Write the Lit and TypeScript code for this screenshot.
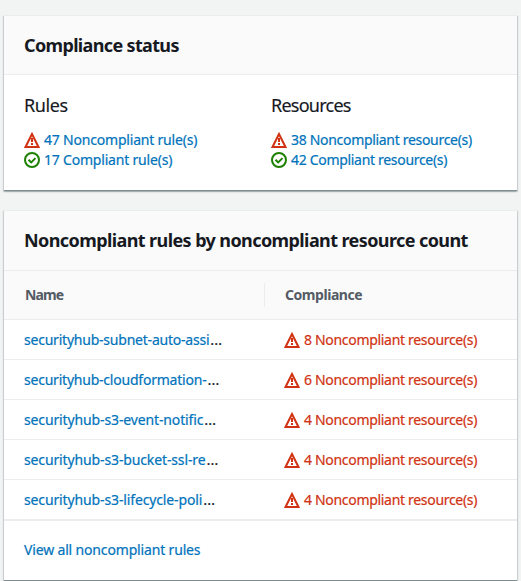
import { LitElement, html, css, svg } from "lit";
import { customElement, property } from "lit/decorators.js";

@customElement("status-icon")
class StatusIcon extends LitElement {
  @property() kind = "warning";

  static styles = css`
    :host { display: block; width: 16px; height: 16px; flex: none; }
    svg { display: block; fill: none; stroke-width: 2; }
    .warning { stroke: #d13212; }
    .success { stroke: #1d8102; }
  `;

  render() {
    const shape =
      this.kind === "warning"
        ? svg`<path d="M8 2 1.5 15h13z"/><path d="M8 6v4M8 11v2"/>`
        : svg`<circle cx="8" cy="8" r="7"/><path d="m4.5 7.8 2.7 2.6 4.3-4.3"/>`;
    return html`<svg class=${this.kind} width="16" height="16" viewBox="0 0 16 16">${shape}</svg>`;
  }
}

const groups = [
  { title: "Rules", kind: "rules", bad: "47 Noncompliant rule(s)", good: "17 Compliant rule(s)" },
  { title: "Resources", kind: "resources", bad: "38 Noncompliant resource(s)", good: "42 Compliant resource(s)" },
];

const rows = [
  { name: "securityhub-subnet-auto-assi", count: 8 },
  { name: "securityhub-cloudformation-", count: 6 },
  { name: "securityhub-s3-event-notific", count: 4 },
  { name: "securityhub-s3-bucket-ssl-re", count: 4 },
  { name: "securityhub-s3-lifecycle-poli", count: 4 },
];

@customElement("app-root")
class AppRoot extends LitElement {
  static styles = css`
    :host {
      display: block;
      box-sizing: border-box;
      height: 581px;
      padding: 15px 4px 0;
      overflow: hidden;
      background: #f2f3f3;
      color: #16191f;
      font: 14px/20px "Noto Sans", "Open Sans", sans-serif;
      white-space: nowrap;
    }
    * { box-sizing: border-box; }
    .card {
      width: 513px;
      background: #fff;
      border-top: 1px solid #eaeded;
      box-shadow: 1px 1px 1px 0 rgba(0, 28, 36, 0.17), -1px 1px 1px 0 rgba(0, 28, 36, 0.17);
      border-bottom: 1px solid #7f8d91;
    }
    .summary { height: 176px; margin-bottom: 19px; }
    .table { height: 371px; }
    h2, h3 { margin: 0; font-size: 18px; line-height: 22px; }
    h2 {
      height: 59px;
      padding: 18px 20px 0;
      background: #fafafa;
      border-bottom: 1px solid #eaeded;
      font-weight: 700;
      letter-spacing: -0.65px;
    }
    .table h2 { height: 60px; letter-spacing: -0.59px; }
    h3 { font-weight: 400; margin-bottom: 14px; letter-spacing: -0.4px; -webkit-text-stroke: 0.15px; }
    .resources h3 { letter-spacing: -0.75px; }
    .groups { display: grid; grid-template-columns: 247px 1fr; padding: 19px 20px 0; }
    .status { display: flex; align-items: center; gap: 4px; height: 20px; letter-spacing: -0.31px; }
    .rules .status { letter-spacing: -0.2px; }
    .status a, .status span, .name, .footer { -webkit-text-stroke: 0.2px; }
    a { color: #0073bb; text-decoration: none; }
    .columns, .row { display: grid; grid-template-columns: 260px 1fr; align-items: center; }
    .columns {
      height: 49px;
      background: #fafafa;
      border-bottom: 1px solid #eaeded;
      color: #545b64;
      font-weight: 700;
    }
    .columns span { padding-left: 21px; letter-spacing: -0.9px; }
    .columns .second { height: 24px; border-left: 1px solid #eaeded; line-height: 24px; padding-left: 20px; letter-spacing: -0.45px; }
    .row { height: 40px; border-bottom: 1px solid #eaeded; }
    .row:last-of-type { height: 41px; border-bottom-width: 2px; }
    .name, .compliance { padding-left: 20px; }
    .name { letter-spacing: -0.22px; }
    .row:nth-child(n + 3) .name { letter-spacing: -0.13px; }
    .name.s3 { letter-spacing: -0.13px; }
    .dots { margin-left: 1px; font-size: 15px; line-height: 20px; }
    .compliance { color: #d13212; }
    .footer { padding: 19px 20px 0; letter-spacing: -0.16px; }
  `;

  render() {
    return html`
      <section class="card summary">
        <h2>Compliance status</h2>
        <div class="groups">
          ${groups.map(
            (g) => html`<div class=${g.kind}>
              <h3>${g.title}</h3>
              <div class="status"><status-icon kind="warning"></status-icon><a>${g.bad}</a></div>
              <div class="status"><status-icon kind="success"></status-icon><a>${g.good}</a></div>
            </div>`
          )}
        </div>
      </section>
      <section class="card table">
        <h2>Noncompliant rules by noncompliant resource count</h2>
        <div class="columns"><span>Name</span><span class="second">Compliance</span></div>
        <div class="rows">
          ${rows.map(
            (r) => html`<div class="row">
              <div class="name"><a>${r.name}</a><span class="dots">…</span></div>
              <div class="status compliance">
                <status-icon kind="warning"></status-icon><span>${r.count} Noncompliant resource(s)</span>
              </div>
            </div>`
          )}
        </div>
        <div class="footer"><a>View all noncompliant rules</a></div>
      </section>
    `;
  }
}
